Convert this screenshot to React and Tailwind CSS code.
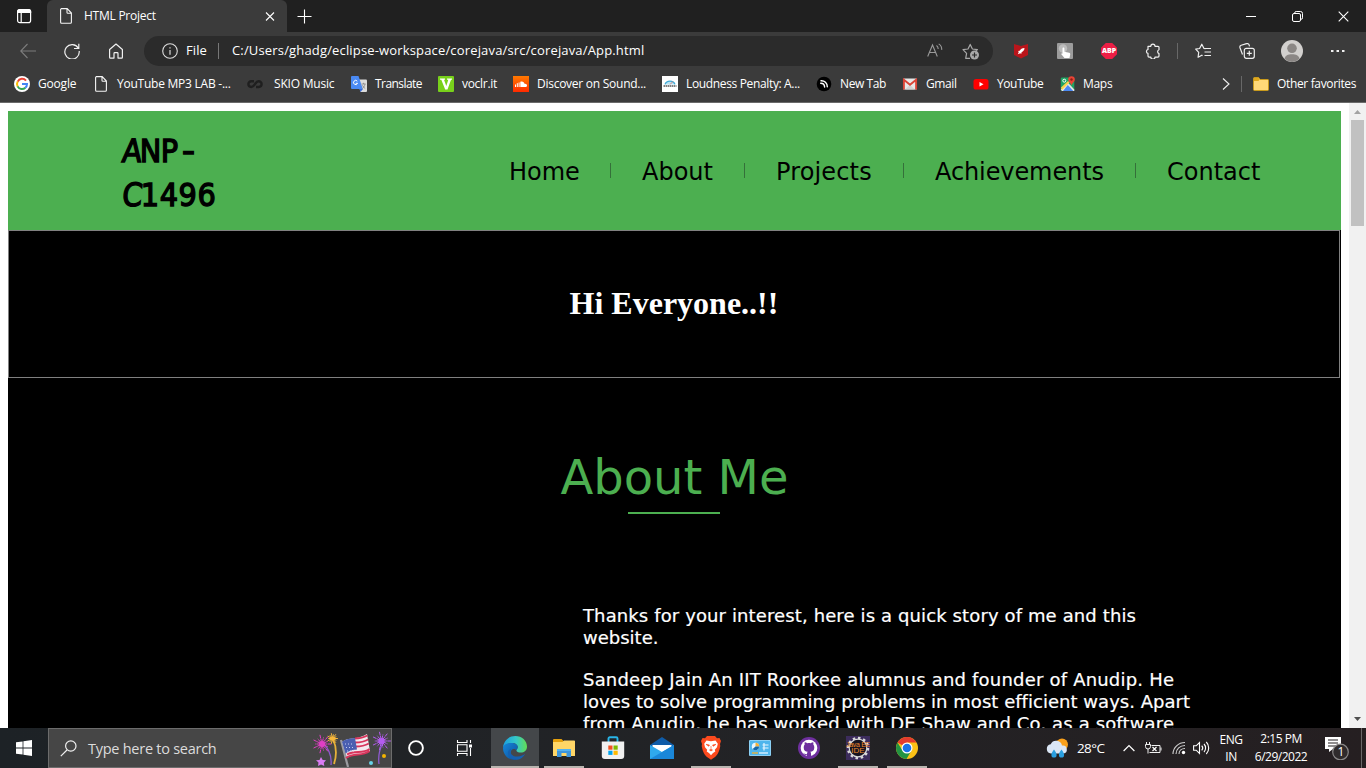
import React from "react";

const UI = "font-['Open_Sans','Noto_Sans',sans-serif]";

function Svg({ w = 16, h = w, vb = `0 0 ${w} ${h}`, className = "", children }) {
  return (
    <svg width={w} height={h} viewBox={vb} className={`block shrink-0 ${className}`} fill="none">
      {children}
    </svg>
  );
}

function Slot({ className = "", children }) {
  return <div className={`flex h-full shrink-0 items-center justify-center ${className}`}>{children}</div>;
}

/* ---------- Favourite icons ---------- */

const PageIcon = ({ className }) => (
  <Svg w={16} className={className}>
    <path d="M3 .6h6.2L13.4 5v9.2a1 1 0 0 1-1 1H3.600a1 1 0 0 1-1-1V1.600a1 1 0 0 1 1-1zM9 .6V4.500a.8.800 0 0 0 .8.800h3.600" stroke="#f4f4f4" strokeWidth="1.1" />
  </Svg>
);

const GoogleIcon = () => (
  <Svg w={16}>
    <circle cx="8" cy="8" r="8" fill="#fff" />
    <path d="M12 4.600A5 5 0 0 0 3.700 5.600" stroke="#ea4335" strokeWidth="2" />
    <path d="M3.700 5.500a5 5 0 0 0 0 5" stroke="#fbbc05" strokeWidth="2" />
    <path d="M3.600 10.400a5 5 0 0 0 7.800 1.300" stroke="#34a853" strokeWidth="2" />
    <path d="M8 8h5a5 5 0 0 1-1.700 3.800" stroke="#4285f4" strokeWidth="2" />
  </Svg>
);

const SkioIcon = () => (
  <Svg w={16}>
    <path d="M7 5.200H4.300a2.900 2.900 0 0 0 0 5.800c3.700 0 3.700-5.800 7.400-5.800a2.900 2.900 0 0 1 0 5.800H9" stroke="#1f1f1f" strokeWidth="2.400" />
  </Svg>
);

const TranslateIcon = () => (
  <Svg w={16}>
    <path d="M6 3.500h9a1 1 0 0 1 1 1V15a1 1 0 0 1-1 1H9.500z" fill="#dcdcdc" />
    <path d="M8.500 13h3.500l-2.500 3z" fill="#3367d6" />
    <path d="M1 0h6.500l4.300 13H1a1 1 0 0 1-1-1V1a1 1 0 0 1 1-1z" fill="#4a8af4" />
    <path d="M6.300 5.200a2.100 2.100 0 1 0 .3 2.100H4.700" stroke="#fff" strokeWidth="1" />
    <path d="M10.500 8h4.200M12.600 6.800V8M11.300 12.500c1.500-1 2.300-2.500 2.600-4.300M11.500 9.300c.6 1.500 1.500 2.500 2.700 3.200" stroke="#808080" strokeWidth=".8" />
  </Svg>
);

const VoclrIcon = () => (
  <Svg w={16}>
    <rect width="16" height="16" rx="1" fill="#78d11b" />
    <path d="M2 2.500h5v1.300H6L8.300 10l2-6.200H9V2.500h5v1.300h-1L9.500 13.500h-2.300L3.300 3.800H2z" fill="#fff" />
  </Svg>
);

const SoundIcon = () => (
  <Svg w={16}>
    <defs>
      <linearGradient id="sc" x1="0" y1="0" x2="0" y2="1">
        <stop stopColor="#ff7a00" />
        <stop offset="1" stopColor="#ff2a00" />
      </linearGradient>
    </defs>
    <rect width="16" height="16" fill="url(#sc)" />
    <path d="M2.500 8.500v2.500M4.300 7.200V11M6.100 6.500V11" stroke="#fff" strokeWidth="1" />
    <path d="M7.300 5.800c2-1 4 .2 4.200 2 1.400-.3 2.500.5 2.500 1.700 0 1-.8 1.600-1.700 1.600h-5z" fill="#fff" />
  </Svg>
);

const LoudIcon = () => (
  <Svg w={16}>
    <rect width="16" height="16" fill="#fff" />
    <path d="M3 8.600a5.200 4.600 0 0 1 10 0" fill="#b8e2f2" />
    <path d="M3 8.400a5.200 4.600 0 0 1 10 0" stroke="#3fa9d6" strokeWidth="1.200" />
    <path d="M8 8.500l3-3" stroke="#e36a5c" strokeWidth=".8" />
    <path d="M1.500 10h13" stroke="#555" strokeWidth="1.400" strokeDasharray="1.500 .5" />
  </Svg>
);

const NewTabIcon = () => (
  <Svg w={16}>
    <circle cx="8" cy="8" r="7.300" fill="#000" />
    <path d="M5 4.700c3.500-.3 6.300 2.500 6.300 6M4.700 7.300c2.200 0 3.800 1.500 3.900 3.700" stroke="#fff" strokeWidth="1.400" strokeLinecap="round" />
  </Svg>
);

const GmailIcon = () => (
  <Svg w={16}>
    <rect x="1" y="2.500" width="14" height="11" rx="1" fill="#e8e8e8" />
    <path d="M3 13.500l5-4.500 5 4.500z" fill="#d2d2d2" />
    <path d="M1.900 13.500V3.800L8 8.800l6.100-5v9.700" stroke="#db4437" strokeWidth="1.900" />
  </Svg>
);

const YoutubeIcon = () => (
  <Svg w={16}>
    <rect x=".5" y="3" width="15" height="10.500" rx="2.600" fill="#f00" />
    <path d="M6.500 6v4.500l4-2.250z" fill="#fff" />
  </Svg>
);

const MapsIcon = () => (
  <Svg w={16}>
    <rect x=".8" y="1.500" width="13.500" height="13.500" rx="1.200" fill="#1fa463" />
    <path d="M.8 13.500l7-7 6.500 7V15H2z" fill="#e6e6e6" />
    <path d="M3 15l4.800-6 5.500 6z" fill="#4a89f3" />
    <path d="M1 11.500L8 5l1.500 1.500L2 14z" fill="#fbd14b" />
    <circle cx="4.300" cy="4.700" r="1.500" stroke="#fff" />
    <path d="M11.500.2a3.300 3.300 0 0 1 3.300 3.300c0 2.300-2.500 3-3.300 6.200-.8-3.200-3.300-3.900-3.300-6.200A3.300 3.300 0 0 1 11.500.2z" fill="#ea4335" />
    <circle cx="11.500" cy="3.500" r="1.200" fill="#8c1f16" />
  </Svg>
);

const bookmarks = [
  { icon: <GoogleIcon />, label: "Google", w: "w-[80px]", t: "tracking-[-0.2px]" },
  { icon: <PageIcon className="-ml-px" />, label: "YouTube MP3 LAB -...", w: "w-[153px]", t: "tracking-[-0.24px]" },
  { icon: <SkioIcon />, label: "SKIO Music", w: "w-[104px]", t: "ml-[3px] tracking-[-0.2px]" },
  { icon: <TranslateIcon />, label: "Translate", w: "w-[87px]", t: "tracking-[-0.55px]" },
  { icon: <VoclrIcon />, label: "voclr.it", w: "w-[75px]", t: "tracking-[-0.3px]" },
  { icon: <SoundIcon />, label: "Discover on Sound...", w: "w-[149px]", t: "tracking-[-0.26px]" },
  { icon: <LoudIcon />, label: "Loudness Penalty: A...", w: "w-[154px]", t: "tracking-[-0.35px]" },
  { icon: <NewTabIcon />, label: "New Tab", w: "w-[86px]", t: "tracking-[-0.41px]" },
  { icon: <GmailIcon />, label: "Gmail", w: "w-[71px]", t: "tracking-[-0.41px]" },
  { icon: <YoutubeIcon />, label: "YouTube", w: "w-[87px]", t: "tracking-[-0.45px]" },
  { icon: <MapsIcon />, label: "Maps", w: "w-[66px]", t: "-ml-px tracking-[-0.3px]" },
];

/* ---------- Browser chrome ---------- */

function TabStrip() {
  return (
    <div className="flex h-8 bg-[#202020]">
      <Slot className="w-[47px]">
        <Svg w={16}>
          <rect x="1.600" y="1.600" width="13" height="13" rx="2.200" stroke="#fff" strokeWidth="1.200" />
          <path d="M1.600 4.300V3.600a2 2 0 0 1 2-2h9a2 2 0 0 1 2 2v.7zM1.600 4h3.600v10.600" stroke="#fff" strokeWidth="1.200" fill="none" />
          <rect x="2" y="2" width="12" height="2.500" fill="#fff" />
        </Svg>
      </Slot>
      <div className="flex w-[240px] items-center rounded-t-md bg-[#3b3b3b] pl-[11px]">
        <PageIcon />
        <span className="ml-[10px] w-[181px] text-[12px] tracking-[-0.25px] text-white">HTML Project</span>
        <Svg w={10}>
          <path d="M1 1.500l8 8M9 1.500l-8 8" stroke="#fff" strokeWidth="1.100" />
        </Svg>
      </div>
      <Slot className="w-[35px]">
        <Svg w={15}>
          <path d="M7.500 .5v14M.5 7.500h14" stroke="#fff" strokeWidth="1.100" />
        </Svg>
      </Slot>
      <div className="flex-1" />
      <Slot className="w-[46px]">
        <Svg w={10}>
          <path d="M0 5.500h10" stroke="#fff" />
        </Svg>
      </Slot>
      <Slot className="w-[46px]">
        <Svg w={11}>
          <rect x=".5" y="2.500" width="8" height="8" rx="1.500" stroke="#fff" />
          <path d="M2.700 2.300V2a1.500 1.500 0 0 1 1.500-1.500h4.300a2 2 0 0 1 2 2v4.300a1.500 1.500 0 0 1-1.500 1.500h-.3" stroke="#fff" />
        </Svg>
      </Slot>
      <Slot className="w-[46px]">
        <Svg w={11}>
          <path d="M.7 .7l9.600 9.600M10.300 .7L.7 10.300" stroke="#fff" strokeWidth="1.100" />
        </Svg>
      </Slot>
    </div>
  );
}

function Toolbar() {
  return (
    <div className="flex h-[38px] items-center text-[13px] text-white">
      <Slot className="ml-1.5 w-11">
        <Svg w={16}>
          <path d="M16 8H.8M7.500 1L.7 8l6.800 7" stroke="#7d7d7d" strokeWidth="1.100" />
        </Svg>
      </Slot>
      <Slot className="w-11">
        <Svg w={16}>
          <path d="M14.300 5.300A7.200 7.200 0 1 0 15.200 8M14.800 .8v4.700H10" stroke="#f0f0f0" strokeWidth="1.200" />
        </Svg>
      </Slot>
      <Slot className="w-11">
        <Svg w={16}>
          <path d="M1.600 6.500L8 1l6.400 5.500v7.700a.9.900 0 0 1-.9.900H10V10.500a.8.800 0 0 0-.8-.8H6.800a.8.800 0 0 0-.8.800v4.600H2.500a.9.900 0 0 1-.9-.9z" stroke="#f0f0f0" strokeWidth="1.200" strokeLinejoin="round" />
        </Svg>
      </Slot>
      <div className="ml-1.5 flex h-[30px] w-[849px] items-center rounded-full bg-[#2b2b2b] pl-[18px]">
        <Svg w={16}>
          <circle cx="8" cy="8" r="7.300" stroke="#ddd" strokeWidth="1.100" />
          <path d="M8 7v4.800M8 4.200v1.300" stroke="#ddd" strokeWidth="1.200" />
        </Svg>
        <span className="ml-2 w-8 tracking-[0.1px]">File</span>
        <div className="h-4 w-px bg-[#777]" />
        <span className="ml-[13px] w-[695px] whitespace-nowrap tracking-[0.16px]">
          C:/Users/ghadg/eclipse-workspace/corejava/src/corejava/App.html
        </span>
        <Svg w={16}>
          <path d="M.7 13.500L5.500 2l4.800 11.500M2.300 9.500h6.400M9.500 2.500c1.200.8 1.700 2 1.700 3.500M11.700 .9c2.200 1.400 3.200 3.500 3 6" stroke="#999" strokeWidth="1.100" />
        </Svg>
        <Svg w={18} className="ml-[19px] mt-0.5">
          <path d="M8 15.300l-4.300 0 .9-5L1 6.700l5-.7L8.200 1.400 10.400 6l5 .7-2 2" stroke="#a8a8a8" strokeWidth="1.200" strokeLinejoin="round" />
          <circle cx="12.500" cy="12" r="4.500" fill="#a8a8a8" />
          <path d="M12.500 9.500v5M10 12h5" stroke="#2b2b2b" strokeWidth="1.200" />
        </Svg>
      </div>
      <Slot className="ml-[6px] w-11">
        <Svg w={14} h={16}>
          <path d="M0 1l7 2 7-2v11l-7 3.500L0 12z" fill="#b9151b" />
          <path d="M10.500 5c-2.500 0-4 1.200-4.800 2.700l-1.700.3.800.9-1 2.300 2.500-1 .9.800.4-1.700C9.300 8.500 10.500 7 10.500 5z" fill="#fff" />
        </Svg>
      </Slot>
      <Slot className="w-11">
        <Svg w={16}>
          <rect width="16" height="16" rx="1" fill="#9c9c9c" />
          <circle cx="6" cy="5.500" r="4.200" fill="#bdbdbd" />
          <path d="M5.500 5.500c0-1.300 1.900-1.300 1.900 0v3.200l4.700 1.100c1 .3 1.200.8 1.100 1.700L12.500 15H7.500L4.300 11.300c-.4-.8.600-1.200 1.200-.7z" fill="#fff" />
        </Svg>
      </Slot>
      <Slot className="w-11">
        <div className="flex h-4 w-4 items-center justify-center bg-[#ed1e45] font-['Open_Sans',sans-serif] text-[7px] font-extrabold tracking-[-0.1px] [clip-path:polygon(30%_0,70%_0,100%_30%,100%_70%,70%_100%,30%_100%,0_70%,0_30%)]">
          ABP
        </div>
      </Slot>
      <Slot className="w-11">
        <Svg w={16}>
          <path d="M3 3.300h2.800a2.100 2.100 0 0 1 4.200 0h3a1 1 0 0 1 1 1v2.500a2 2 0 0 0 0 3.800v2.500a1 1 0 0 1-1 1h-3a2.100 2.100 0 0 1-4.200 0H4a1 1 0 0 1-1-1v-2.700a2 2 0 0 1 0-3.900V3.300z" stroke="#f0f0f0" strokeWidth="1.200" strokeLinejoin="round" />
        </Svg>
      </Slot>
      <div className="mx-[1.500px] h-4 w-px bg-[#686868]" />
      <Slot className="w-[48px]">
        <Svg w={16}>
          <path d="M10.500 5.700L9 5.500 6.800 1.200 4.600 5.500.7 6.200l3 3.100-.6 4.900 3.700-2 .8.400M9.500 5.500H16M9.500 9H16M9.500 12.500H16" stroke="#f0f0f0" strokeWidth="1.200" strokeLinejoin="round" />
        </Svg>
      </Slot>
      <Slot className="w-10">
        <Svg w={16}>
          <rect x="5.300" y="5.300" width="10" height="10" rx="2" stroke="#f0f0f0" strokeWidth="1.200" />
          <path d="M10.300 7.800v5M7.800 10.300h5M3.500 11.500L1 4.700a2 2 0 0 1 1.200-2.500L7.500 .7a2 2 0 0 1 2.600 1.200l.4 1.400" stroke="#f0f0f0" strokeWidth="1.200" />
        </Svg>
      </Slot>
      <Slot className="w-[50px]">
        <Svg w={22}>
          <circle cx="11" cy="11" r="11" fill="#d2d0ce" />
          <circle cx="11" cy="8.300" r="4.800" fill="#8b8785" />
          <path d="M3.500 18.800c.5-3.200 3.500-4.500 7.500-4.500s7 1.300 7.500 4.500A11 11 0 0 1 11 22a11 11 0 0 1-7.500-3.200z" fill="#8b8785" />
        </Svg>
      </Slot>
      <Slot className="w-[42px]">
        <Svg w={14} h={4}>
          <path d="M0 1h2.500v2H0zM5.500 1H8v2H5.500zM11 1h2.500v2H11z" fill="#f0f0f0" />
        </Svg>
      </Slot>
    </div>
  );
}

function BookmarkBar() {
  return (
    <div className="flex h-[28px] items-center pl-3.5 text-[12px] text-white">
      {bookmarks.map((b) => (
        <div key={b.label} className={`flex shrink-0 items-center gap-2 whitespace-nowrap ${b.w}`}>
          {b.icon}
          <span className={b.t}>{b.label}</span>
        </div>
      ))}
      <div className="flex-1" />
      <Svg w={8} h={12}>
        <path d="M1 .5L7 6l-6 5.500" stroke="#f0f0f0" strokeWidth="1.100" />
      </Svg>
      <div className="ml-[11px] h-4 w-px bg-[#686868]" />
      <Svg w={16} className="ml-[11px]">
        <path d="M.5 2.500a1 1 0 0 1 1-1h4L7 3.500h8a.8.800 0 0 1 .5.8v9.200a1 1 0 0 1-1 1h-13a1 1 0 0 1-1-1z" fill="#ffd978" stroke="#c99a1c" />
        <path d="M1 2h4.500l1 1.500L5.500 5H1z" fill="#e0a71b" />
      </Svg>
      <span className="ml-2 mr-[10px] w-[79px] whitespace-nowrap tracking-[-0.35px]">Other favorites</span>
    </div>
  );
}

/* ---------- Web page ---------- */

function Divider() {
  return <div className="h-[15px] w-px bg-[#35703a]" />;
}

function WebPage() {
  return (
    <div className="flex h-[625px] overflow-hidden bg-white">
      <main className="ml-2 mr-2 mt-2 w-[1333px] shrink-0 bg-black font-['DejaVu_Sans',Verdana,sans-serif]">
        <header className="flex h-[119px] items-center bg-[#4caf50] text-black">
          <div className="ml-[112px] w-[389px] pt-1 font-['DejaVu_Sans_Condensed','DejaVu_Sans',sans-serif] text-[32px] leading-[44px] [-webkit-text-stroke:1.3px_black]">
            <div className="flex [font-stretch:condensed]">
              <span className="inline-block origin-bottom-left -skew-x-6">A</span>
              <span className="tracking-[-0.5px]">NP</span>
              <span className="ml-1 inline-block origin-left scale-x-125">-</span>
            </div>
            <div className="tracking-[0.6px] [font-stretch:condensed]">
              <span className="inline-block origin-bottom-left -skew-x-6">C</span>1496
            </div>
          </div>
          <nav className="flex items-center text-[24px] leading-none">
            <span className="w-[101px] pt-[3px]">Home</span>
            <Divider />
            <span className="w-[133px] pl-[31px] pt-[3px]">About</span>
            <Divider />
            <span className="w-[158px] pl-[31px] pt-[3px] tracking-[0.15px]">Projects</span>
            <Divider />
            <span className="w-[231px] pl-[31px] pt-[3px] tracking-[-0.1px]">Achievements</span>
            <Divider />
            <span className="pl-[31px] pt-[3px]">Contact</span>
          </nav>
        </header>
        <section className="mr-px flex h-[148px] items-center justify-center border border-[#808080] pb-[2px]">
          <h1 className="font-['Liberation_Serif','Times_New_Roman',serif] text-[32px] font-bold leading-none text-white">Hi Everyone..!!</h1>
        </section>
        <section className="pt-[70px]">
          <h2 className="text-center text-[48px] leading-[58px] text-[#4caf50]">About Me</h2>
          <div className="ml-[620px] mt-[6px] h-[2px] w-[92px] bg-[#4caf50]" />
          <div className="ml-[575px] mt-[91px] flex flex-col gap-5 whitespace-nowrap text-[18px] leading-[22px] text-white [-webkit-text-stroke:0.2px_white]">
            <p>
              <span className="tracking-[0.12px]">Thanks for your interest, here is a quick story of me and this</span>
              <br />
              website.
            </p>
            <p>
              <span className="tracking-[0.2px]">Sandeep Jain An IIT Roorkee alumnus and founder of Anudip. He</span>
              <br />
              <span className="tracking-[0.03px]">loves to solve programming problems in most efficient ways. Apart</span>
              <br />
              <span className="tracking-[0.14px]">from Anudip, he has worked with DE Shaw and Co. as a software</span>
            </p>
          </div>
        </section>
      </main>
      <div className="flex w-[17px] shrink-0 flex-col items-center bg-[#f1f1f1]">
        <Svg w={17} h={17}>
          <path d="M5 11l3.500-4 3.500 4z" fill="#a3a3a3" />
        </Svg>
        <div className="h-[106px] w-[13px] bg-[#c1c1c1]" />
        <div className="flex-1" />
        <Svg w={17} h={17}>
          <path d="M5 6l3.500 4L12 6z" fill="#505050" />
        </Svg>
      </div>
    </div>
  );
}

/* ---------- Taskbar ---------- */

function Burst({ x, y, r, color }) {
  const rays = Array.from({ length: 14 }, (_, i) => (i * Math.PI * 2) / 14);
  return (
    <g stroke={color} strokeWidth="1" strokeLinecap="round" strokeDasharray="5 1.200">
      {rays.map((a, i) => (
        <path key={i} d={`M${x} ${y}L${x + Math.cos(a) * r * (i % 2 ? 0.7 : 1)} ${y + Math.sin(a) * r * (i % 2 ? 0.7 : 1)}`} />
      ))}
      <circle cx={x} cy={y} r={r * 0.3} fill={color} />
    </g>
  );
}

function Celebration() {
  return (
    <Svg w={78} h={38}>
      <path d="M10 14c6 6 9 13 8 22" stroke="#8f5bd0" strokeWidth="1.300" />
      <path d="M20 10c4 9 4 16 1 25" stroke="#e6b13a" strokeWidth="1.800" />
      <path d="M70 14c-4 7-5 13-4 21" stroke="#8f5bd0" strokeWidth="1.300" />
      <Burst x={9} y={15} r={9} color="#e03fc4" />
      <Burst x={19.500} y={9.500} r={5.500} color="#f6b73c" />
      <Burst x={68.500} y={12} r={9} color="#b45cf0" />
      <path d="M28 11l7 27" stroke="#9b9ba0" strokeWidth="2.200" />
      <path d="M29 13c7-6 14-1 25-8l3 17c-8 6-15 1-23 7z" fill="#f3e9ee" />
      <path d="M42 9.500c4 0 8-.5 12.500-3M42 13.500c5 0 9-.5 13.200-3M42.500 17.500c5 0 9-.5 13.300-3M34 25.500c8-5 15 0 22.500-5.500M33 29c8-6 15-1 23.700-7" stroke="#d8355c" strokeWidth="1.900" />
      <path d="M29 13c4-3.500 8-3.300 13-4l2 11.500c-4 .5-7 .7-11.500 4z" fill="#4a5fb0" />
      <path d="M32 15h9M33 18.500h9M34 22h8" stroke="#c5cdf0" strokeWidth="1" strokeDasharray="1 2" />
      <path d="M8 28l1.700 3 3.300.3-2.200 2.400.5 3.300L8 35.500 5 37l.5-3.400L3 31.300l3.500-.3z" fill="#da7cf3" />
      <circle cx="58" cy="34" r="2" fill="#67d3e8" />
      <circle cx="71" cy="27" r="2" fill="#f4b400" />
    </Svg>
  );
}

const EdgeIcon = () => (
  <Svg w={24}>
    <defs>
      <linearGradient id="eg" x1="0" y1=".5" x2="1" y2=".5">
        <stop stopColor="#1b9ee0" />
        <stop offset=".55" stopColor="#35c8c8" />
        <stop offset="1" stopColor="#62dc54" />
      </linearGradient>
      <linearGradient id="eb" x1="0" y1="0" x2="1" y2="1">
        <stop stopColor="#1687d9" />
        <stop offset="1" stopColor="#0c4f9c" />
      </linearGradient>
    </defs>
    <path d="M0 11.500C.6 4.500 6 0 12.300 0 19 0 24 4.800 24 10.500c0 4-3 6-6 6-2.800 0-4.600-1-4.600-2.100 0-.9 1.300-1.400 1.300-3.300 0-2.500-2.700-4-5.700-4C4.500 7.100 1 9.500 0 11.500z" fill="url(#eg)" />
    <path d="M0 12C.5 9 3.800 7 8.500 7c3.500 0 6.200 1.700 6.200 4.200 0 1.700-1.200 2.200-1.300 3.100-2.500-2.800-5.700-1-5.700 2.200 0 4 3.500 7.500 7 7.200-1 .3-1.700.3-2.700.3C5 24 0 18.500 0 12z" fill="url(#eb)" />
    <path d="M8.300 12.700C6 17.300 9.500 21 14.500 20.500c3.500-.3 6-1.500 7.800-2.800-1.800 3.400-5 5.700-8.300 6.100-5 .3-9.500-3.300-9-7.500.2-2 1.500-3.200 3.300-3.600z" fill="#1560b0" />
  </Svg>
);

const ExplorerIcon = () => (
  <Svg w={22} h={20}>
    <path d="M0 2a1 1 0 0 1 1-1h7.500l2 2H21v14H1a1 1 0 0 1-1-1z" fill="#e5a00d" />
    <path d="M0 4h9.500L11 2.500h10.200a.8.800 0 0 1 .8.800V18H0z" fill="#ffd667" />
    <path d="M4 19v-8h14v8h-4.500v-4h-5v4z" fill="#3d95db" />
    <path d="M4 11h14v2H4z" fill="#54b3f0" />
  </Svg>
);

const StoreIcon = () => (
  <Svg w={24}>
    <path d="M7.500 6V2.500A1.300 1.300 0 0 1 8.800 1.200h6.400a1.300 1.300 0 0 1 1.300 1.300V6" stroke="#29b5e8" strokeWidth="1.900" />
    <path d="M.8 5.500h22.400V20a3 3 0 0 1-3 3H3.800a3 3 0 0 1-3-3z" fill="#f1f1f1" />
    <path d="M7.300 9.500h4.200v4.200H7.300z" fill="#f25022" />
    <path d="M12.500 9.500h4.200v4.200h-4.200z" fill="#7fba00" />
    <path d="M7.300 14.700h4.200v4.200H7.300z" fill="#00a4ef" />
    <path d="M12.500 14.700h4.200v4.200h-4.200z" fill="#ffb900" />
  </Svg>
);

const MailIcon = () => (
  <Svg w={24} h={22}>
    <path d="M0 8L12 0l12 8v4H0z" fill="#0f5ca8" />
    <path d="M2.500 8h19v5L12 18 2.500 13z" fill="#fff" />
    <path d="M0 8l12 7 12-7v14H0z" fill="#2fa9ed" />
    <path d="M0 22L24 8v14z" fill="#1a87d9" />
  </Svg>
);

const BraveIcon = () => (
  <Svg w={20} h={24}>
    <path d="M6 0h8l2 2.300L18.500 2 20 5l-1 3 .3 2c-1 6-3 9-5.300 11l-4 2.800L6 21C3.700 19 1.700 16 .7 10L1 8 0 5l1.500-3 2.500.3z" fill="#fb4a1e" />
    <path d="M5.500 4.500L10 5.300l4.500-.8 2.300 3.200-.8 3.500-2.200 2.500.5 1.800-2.300 1.500L10 19.300 8 17l-2.300-1.500.5-1.800L4 11.200l-.8-3.500z" fill="#fff" />
    <path d="M5 8.300l3.500.8-.8 1.200zM15 8.300l-3.500.8.8 1.200zM10 10v3.500M8.500 14l1.500-.6 1.500.6L10 15z" fill="#fb4a1e" stroke="#fb4a1e" strokeWidth=".6" />
  </Svg>
);

const PanelIcon = () => (
  <Svg w={22} h={16}>
    <rect width="22" height="16" rx="1" fill="#8bd0f5" />
    <rect x="1" y="1" width="20" height="14" fill="#4fb5ec" />
    <circle cx="6.500" cy="6.500" r="3.700" fill="#e9f7ff" />
    <path d="M6.500 6.500V2.800a3.700 3.700 0 0 1 3.700 3.700z" fill="#f3b13b" />
    <path d="M6.500 6.500h3.700a3.700 3.700 0 0 1-6.500 2.400z" fill="#1468a9" />
    <path d="M13.500 5h6M13.500 8h6M15 3v7.500" stroke="#e9f7ff" strokeWidth="1.200" />
    <path d="M3 13h6" stroke="#e8b13b" strokeWidth="1.400" />
    <path d="M10 13h9" stroke="#d9f0ff" strokeWidth="1.400" />
  </Svg>
);

const GithubIcon = () => (
  <Svg w={22}>
    <circle cx="11" cy="11" r="11" fill="#6e2f9e" />
    <circle cx="11" cy="11" r="8.300" fill="#fff" />
    <path d="M6.800 5.300c1 0 1.800.5 2.400 1 1.200-.3 2.400-.3 3.600 0 .6-.5 1.400-1 2.400-1 .3.900.3 1.700.1 2.300.7.800 1 1.700 1 2.800 0 3-1.700 4-4 4.300.5.500.7 1 .7 1.800v3.500H9v-2.200c-2.600.6-3-1-4-1.600 1.500-.3 2 1.300 4 .7 0-.9.200-1.700.7-2.200-2.300-.3-4-1.300-4-4.300 0-1.100.3-2 1-2.800-.2-.6-.2-1.400.1-2.300z" fill="#6e2f9e" />
  </Svg>
);

function EclipseIcon() {
  return (
    <div className="relative h-6 w-6 overflow-hidden bg-[#3c2c5c]">
      <Svg w={24}>
        <circle cx="12" cy="12" r="10" stroke="#d9d9d9" strokeWidth="2.500" strokeDasharray="2.500 2.700" />
        <circle cx="12" cy="12" r="8.800" fill="#17131f" stroke="#d9d9d9" strokeWidth="1.200" />
      </Svg>
      <div className="absolute inset-0 flex flex-col items-center justify-center font-['Liberation_Sans',sans-serif] text-[7px] leading-[6px] text-[#f08a2c]">
        <span className="whitespace-nowrap tracking-[-0.3px]">Java EE</span>
        <span className="text-[8px]">IDE</span>
      </div>
    </div>
  );
}

const ChromeIcon = () => (
  <Svg w={22}>
    <circle cx="11" cy="11" r="11" fill="#fbc116" />
    <path d="M11 11L1.500 5.500A11 11 0 0 1 20.500 5.500H11z" fill="#e33b2e" />
    <path d="M1.500 5.500a11 11 0 0 0 9 16.500l5-8.500L11 11 5.500 12z" fill="#229342" />
    <circle cx="11" cy="11" r="5.500" fill="#fff" />
    <circle cx="11" cy="11" r="4.300" fill="#1a73e8" />
  </Svg>
);

const apps = [
  { icon: <EdgeIcon />, active: true },
  { icon: <ExplorerIcon />, open: true },
  { icon: <StoreIcon /> },
  { icon: <MailIcon /> },
  { icon: <BraveIcon />, open: true },
  { icon: <PanelIcon /> },
  { icon: <GithubIcon /> },
  { icon: <EclipseIcon />, open: true },
  { icon: <ChromeIcon />, open: true },
];

function TaskApp({ icon, active, open }) {
  return (
    <div className={`flex h-10 w-[48px] flex-col items-center ${active ? "bg-[#44474a]" : ""}`}>
      <div className="flex h-[38px] items-center pt-0.5">{icon}</div>
      <div className={`h-0.5 ${active ? "w-full bg-[#b9b5b0]" : open ? "w-10 bg-[#b9b5b0]" : ""}`} />
    </div>
  );
}

function Taskbar() {
  return (
    <div className="flex h-10 items-center bg-gradient-to-r from-[#1d2226] via-[#222326] to-[#251f21] text-white">
      <Slot className="w-12">
        <Svg w={16}>
          <path d="M0 2.300L6.600 1.400v6.200H0zM7.400 1.300L16 0v7.600H7.400zM0 8.400h6.600v6.200L0 13.700zM7.400 8.400H16V16l-8.600-1.200z" fill="#fff" />
        </Svg>
      </Slot>
      <div className="flex h-10 w-[344px] items-center border border-[#6c6c6c] bg-[#464646] pl-[11px]">
        <Svg w={17}>
          <circle cx="10.800" cy="6" r="5.200" stroke="#f0f0f0" strokeWidth="1.200" />
          <path d="M7 10L.8 16.200" stroke="#f0f0f0" strokeWidth="1.200" />
        </Svg>
        <span className="ml-[11px] flex-1 pt-px text-[14.500px] tracking-[-0.26px] text-[#dcdcdc]">Type here to search</span>
        <Celebration />
      </div>
      <Slot className="w-12">
        <Svg w={16}>
          <circle cx="8" cy="8" r="6.900" stroke="#fff" strokeWidth="1.900" />
        </Svg>
      </Slot>
      <Slot className="w-12">
        <Svg w={17} h={16}>
          <path d="M1.500 0v2.500h9.500V0M1.500 16v-2.500h9.500V16M1.500 4.700h9.500v6.600H1.500zM14.500 0v3M14.500 8v8" stroke="#fff" strokeWidth="1.100" />
          <path d="M13 4.500h3v3h-3z" fill="#fff" />
        </Svg>
      </Slot>
      <div className="ml-[3px] flex gap-px">
        {apps.map((a, i) => (
          <TaskApp key={i} {...a} />
        ))}
      </div>
      <div className="flex-1" />
      <Svg w={23} h={21}>
        <circle cx="16" cy="6.500" r="6" fill="#f9a01b" />
        <path d="M5 15.500a4.700 4.700 0 0 1-.3-9.300A6 6 0 0 1 16 7.500a4 4 0 0 1 1.500 8z" fill="#dbe6f5" />
        <path d="M8 11.500c2 2.800 2.600 4 2.600 5.500a2.600 2.600 0 0 1-5.200 0c0-1.500.6-2.700 2.600-5.500zM15.500 11.500c2 2.800 2.600 4 2.600 5.500a2.600 2.600 0 0 1-5.200 0c0-1.500.6-2.700 2.600-5.500z" fill="#2a9fe0" />
      </Svg>
      <span className="ml-[8px] w-[46px] pt-px text-[13.500px] tracking-[-0.6px]">28°C</span>
      <Svg w={12} h={8}>
        <path d="M.6 7L6 1.500 11.400 7" stroke="#fff" strokeWidth="1.200" />
      </Svg>
      <Svg w={17} h={12} className="ml-[10px]">
        <path d="M1.500 0v2.500M4.500 0v2.500M.5 2.500h5v2a2.500 2.500 0 0 1-5 0zM3 7v4.500M6.500 3.500h8.500v7H4.500M16 5.500v3" stroke="#f0f0f0" strokeWidth="1" />
        <path d="M7.500 5l4 4M11.500 5l-4 4" stroke="#fff" strokeWidth="1.200" />
      </Svg>
      <Svg w={14} className="ml-2.5">
        <path d="M1 13C1 6.500 6.500 1.500 13 1.500M4 13c0-5 4-8.500 9-8.500M7 13c0-3.300 2.700-5.500 6-5.500" stroke="#d0d0d0" strokeWidth="1.100" />
        <circle cx="11.500" cy="11.500" r="1.700" fill="#fff" />
      </Svg>
      <Svg w={17} h={14} className="ml-[7px]">
        <path d="M.6 4.800h2.600L6.500 1.500v11L3.200 9.200H.6zM8.700 4.700c1.200 1.300 1.200 3.300 0 4.600M11 3c2.100 2.200 2.100 5.800 0 8M13.300 1c3.200 3.300 3.200 8.700 0 12" stroke="#fff" strokeWidth="1.100" />
      </Svg>
      <div className="ml-[3px] flex w-9 flex-col items-center text-[12px] leading-[17px] tracking-[-0.5px]">
        <span>ENG</span>
        <span>IN</span>
      </div>
      <div className="ml-[3px] flex w-[58px] flex-col items-center whitespace-nowrap pb-px text-[12px] leading-[18px] tracking-[-0.5px]">
        <span>2:15 PM</span>
        <span>6/29/2022</span>
      </div>
      <div className="relative ml-[15px] h-6 w-6">
        <Svg w={24}>
          <path d="M0 1h16v12H8l-4 3v-3H0z" fill="#fff" />
          <path d="M3 4h10M3 7h10M3 10h10" stroke="#231f20" strokeWidth="1.200" />
          <circle cx="15.500" cy="16" r="7.800" fill="#2f2b2c" stroke="#8a8888" strokeWidth="1.200" />
        </Svg>
        <span className="absolute left-[8px] top-[8px] w-4 text-center text-[12px] leading-4">1</span>
      </div>
      <div className="ml-[12px] mr-1 h-10 w-px bg-[#6a6768]" />
    </div>
  );
}

export default function App() {
  return (
    <div className={`h-[768px] w-[1366px] overflow-hidden bg-[#3b3b3b] ${UI}`}>
      <TabStrip />
      <Toolbar />
      <div className="flex h-[33px] flex-col justify-start border-b border-[#6a6a6a] pb-1">
        <BookmarkBar />
      </div>
      <WebPage />
      <Taskbar />
    </div>
  );
}
